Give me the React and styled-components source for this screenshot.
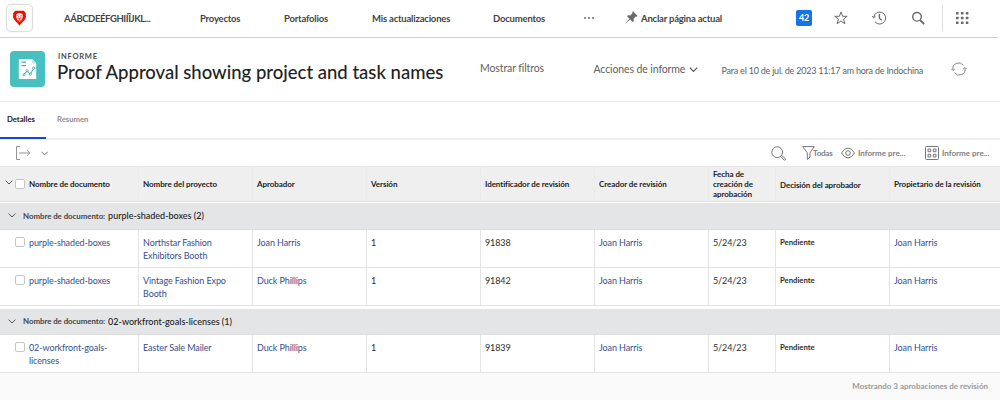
import React from 'react';
import styled, { createGlobalStyle } from 'styled-components';

const GlobalStyle = createGlobalStyle`
  * { box-sizing: border-box; }
  body { margin: 0; background: #fff; color: #2c2c2c; font-family: Lato, "Noto Sans", sans-serif; }
`;

const Page = styled.div`width: 1000px; height: 415px; overflow: hidden;`;

const NavBar = styled.header`
  display: flex; align-items: center; width: 998px; height: 38px;
  padding-left: 6px; border-bottom: 1px solid #cfcfcf;
`;
const LogoTile = styled.div`
  display: grid; place-items: center; width: 27px; height: 28px; flex: none;
  margin: 0 31px 2px 0; border: 1px solid #dedede; border-radius: 5px; box-shadow: 0 0 1px #d0d0d0;
`;
const NavItem = styled.a`
  flex: none; width: ${p => p.$w}px; white-space: nowrap;
  font-size: 9.5px; line-height: 14px; font-weight: 700;
  letter-spacing: ${p => p.$ls ?? -0.2}px; color: #444;
`;
const Ellipsis = styled.span`
  display: flex; gap: 2px; width: 41px; padding-bottom: 2px;
  i { width: 2px; height: 2px; border-radius: 1px; background: #6e6e6e; }
`;
const PinIcon = styled.svg`width: 13px; height: 13px; margin: 0 3px 2px 0; flex: none;`;
const CountBadge = styled.span`
  width: 16px; height: 16px; margin: 0 22px 2px 0; border-radius: 2px; background: #1473e6; color: #fff;
  font-size: 9px; line-height: 15px; font-weight: 700; letter-spacing: -.2px; text-align: center;
`;
const NavIcon = styled.svg`
  width: 14px; height: 14px; margin: 0 ${p => p.$gap || 0}px 2px 0; flex: none;
  fill: none; stroke: #6b6b6b; stroke-width: ${p => p.$stroke || 1};
`;
const NavDivider = styled.span`width: 1px; height: 26px; margin: 0 12px 2px 0; background: #dedede;`;

const ReportHeader = styled.section`
  display: flex; height: 64px; padding: 13px 0 0 10px; border-bottom: 1px solid #e6e6e6;
`;
const ReportTile = styled.div`
  display: grid; place-items: center; width: 35px; height: 36px; margin-right: 12px;
  border-radius: 4px; background: #47c0bf;
`;
const TitleBlock = styled.div`width: 423px; padding-top: 1px;`;
const Eyebrow = styled.div`
  font-size: 7.5px; line-height: 10px; font-weight: 700; letter-spacing: .75px; color: #4a4a4a;
  padding-left: 1px;
`;
const Title = styled.h1`
  margin: -2px 0 0; font-size: 18.5px; line-height: 24px; font-weight: 500;
  color: #222; white-space: nowrap;
`;
const HeaderAction = styled.div`
  display: flex; gap: 4px; width: ${p => p.$w}px; padding-top: ${p => p.$top}px;
  font-size: 10.5px; line-height: 14px; letter-spacing: -.11px; color: #5f5f5f; white-space: nowrap;
  svg { margin-top: 5px; }
`;
const Timestamp = styled.div`
  width: 229px; padding-top: 13px; font-size: 9px; line-height: 14px; letter-spacing: -.22px;
  color: #5f5f5f; white-space: nowrap;
`;
const RefreshIcon = styled.svg`width: 16px; height: 14px; margin-top: 11px;`;

const Tabs = styled.nav`
  display: flex; height: 38px; border-bottom: 2px solid #eee;
`;
const Tab = styled.a`
  height: 37px; width: ${p => (p.$active ? 46 : 53)}px; padding: 11px 0 0 ${p => (p.$active ? 7 : 11)}px;
  font-size: 7.7px; line-height: 12px; font-weight: 700;
  color: ${p => (p.$active ? '#222' : '#8c8c8c')};
  border-bottom: 2px solid ${p => (p.$active ? '#1747d1' : 'transparent')};
`;

const Toolbar = styled.div`
  display: flex; align-items: center; height: 26px; padding: 0 12px 0 16px;
  > svg { flex: none; }
`;
const ToolLabel = styled.span`
  flex: none; font-size: 8px; font-weight: 700; color: #808080; letter-spacing: ${p => p.$ls || 0}px;
  width: ${p => p.$w}px; margin-left: ${p => p.$ml}px; white-space: nowrap;
`;
const ToolIcon = styled.svg`fill: none; stroke: #777; stroke-width: 1; margin-left: ${p => p.$ml || 0}px;`;
const ToolDivider = styled.span`width: 1px; height: 16px; margin-left: 7px; background: #e3e3e3;`;

const GridRow = styled.div`
  display: grid; grid-template-columns: 139px 114px 114px 114px 114px 114px 67px 114px 110px;
  height: ${p => p.$h}px; border-bottom: 1px solid #e4e4e4;
`;
const HeadRow = styled(GridRow)`background: #efefef; border-top: 1px solid #e6e6e6; border-bottom-color: #e2e2e2;`;
const HeadCell = styled.div`
  display: flex; align-items: center; padding: ${p => p.$top || 0}px ${p => p.$right || 0}px 0 4px;
  border-right: 1px solid #ebebeb;
  font-size: 8px; line-height: 10px; font-weight: 700; letter-spacing: -.07px; color: #222;
  &:last-child { border-right: 0; }
  svg { margin: -4px 2px 0 1px; }
`;
const Cell = styled.div`
  display: flex; align-items: flex-start; padding: 6px 4px 0 4px; border-right: 1px solid #e4e4e4;
  font-size: 9px; line-height: 13.3px; letter-spacing: -.1px; color: #2e2e2e;
  &:first-child { padding-left: 15px; }
  &:last-child { border-right: 0; }
`;
const Link = styled.a`color: #35508f;`;
const Strong = styled.span`font-size: 7.7px; font-weight: 700; letter-spacing: 0;`;
const Check = styled.span`
  flex: none; width: 10px; height: 10px; margin: ${p => p.$top || 0}px 4px 0 0;
  background: #fff; border: 1px solid #c6c6c6; border-radius: 2px;
`;
const GroupRow = styled.div`
  display: flex; align-items: center; height: ${p => p.$h}px; margin-top: ${p => p.$mt}px;
  padding: 0 0 1px 8px;
  background: #e4e5e6; border-bottom: 1px solid #dedede; color: #222;
`;
const GroupLabel = styled.span`
  margin: 0 3px 0 7px; font-size: 7.9px; font-weight: 700; letter-spacing: -.05px; color: #444;
`;
const GroupValue = styled.span`font-size: 9px; font-weight: 500;`;
const Footer = styled.footer`
  height: 27px; padding: 7px 12px 0; background: #fafafa; color: #999; text-align: right;
  font-size: 8px; line-height: 13px; font-weight: 700;
`;

const Chevron = ({ w = 8 }) => (
  <svg width={w} height={w / 2 + 1} viewBox="0 0 8 5" fill="none" stroke="#555" strokeWidth="1"><path d="M.6.6 4 4 7.4.6" /></svg>
);

const rows = {
  a: [
    ['purple-shaded-boxes', 'Northstar Fashion Exhibitors Booth', 'Joan Harris', '91838'],
    ['purple-shaded-boxes', 'Vintage Fashion Expo Booth', 'Duck Phillips', '91842'],
  ],
  b: [['02-workfront-goals-licenses', 'Easter Sale Mailer', 'Duck Phillips', '91839']],
};

const DataRow = ({ data: [doc, project, approver, id] }) => (
  <GridRow $h={38}>
    <Cell><Check $top={1} /><Link>{doc}</Link></Cell>
    <Cell><Link>{project}</Link></Cell>
    <Cell><Link>{approver}</Link></Cell>
    <Cell>1</Cell>
    <Cell>{id}</Cell>
    <Cell><Link>Joan Harris</Link></Cell>
    <Cell>5/24/23</Cell>
    <Cell><Strong>Pendiente</Strong></Cell>
    <Cell><Link>Joan Harris</Link></Cell>
  </GridRow>
);

const Group = ({ name, items, h, mt }) => (
  <>
    <GroupRow $h={h} $mt={mt}><Chevron /><GroupLabel>Nombre de documento:</GroupLabel><GroupValue>{name}</GroupValue></GroupRow>
    {items.map(r => <DataRow key={r[3]} data={r} />)}
  </>
);

export default function App() {
  return (
    <Page>
      <GlobalStyle />
      <NavBar>
        <LogoTile>
          <svg width="15" height="16" viewBox="0 0 15 16">
            <path d="M3.2.8h8.6l2.400 3-.6 1 .5 2-1.200 2.600L7.500 15.400 2.100 9.400.9 6.800l.5-2-.6-1z" fill="#eb1000" />
            <path d="m4.500 4 1.800-.8h2.400l1.800.8.300 2.700-1 3L7.500 12 5.200 9.700l-1-3z" fill="#fff" />
            <path d="m4.600 5.300 2 .8M10.400 5.300l-2 .8M6.400 6.400 6 8.700M8.600 6.400 9 8.700M6.600 8.600h1.800l-.9 1zM5.800 10.500h3.400" fill="#eb1000" stroke="#eb1000" strokeWidth=".6" />
          </svg>
        </LogoTile>
        <NavItem $w={136} $ls={-0.41}>AÁBCDEÉFGHIÍÎJKL...</NavItem>
        <NavItem $w={84}>Proyectos</NavItem>
        <NavItem $w={88}>Portafolios</NavItem>
        <NavItem $w={121}>Mis actualizaciones</NavItem>
        <NavItem $w={91}>Documentos</NavItem>
        <Ellipsis><i /><i /><i /></Ellipsis>
        <PinIcon viewBox="0 0 13 13"><path d="m8 .3 4.7 4.6-1.1.8-.8-.1-2.1 2.2.1 2.4-1 .8L5.2 8.4.6 12.6l-.3-.3L4.5 7.7 2 5.2l.8-.9 2.4.1 2.200-2.100-.1-1z" fill="#6b6b6b" /></PinIcon>
        <NavItem $w={155}>Anclar página actual</NavItem>
        <CountBadge>42</CountBadge>
        <NavIcon $gap={24} viewBox="0 0 14 14"><path d="m7 .9 1.600 4.400h4.600L9.500 8.100l1.400 4.600L7 10l-3.900 2.700 1.400-4.600L.8 5.300h4.600z" /></NavIcon>
        <NavIcon $gap={25} viewBox="0 0 14 14"><path d="M1.7 6.600A6 6 0 1 1 3 10.800M0 5l1.700 1.900L3.600 5.200" /><path d="M7.400 3v4.200l2.300 2" strokeWidth="1.400" /></NavIcon>
        <NavIcon $gap={17} $stroke={1.4} viewBox="0 0 14 14"><circle cx="6" cy="5.800" r="4.300" /><path d="m9 9 4.200 4.200" strokeWidth="1.800" /></NavIcon>
        <NavDivider />
        <NavIcon viewBox="0 0 14 14">
          {[1, 5.7, 10.4].flatMap(y => [1, 5.9, 10.8].map(x => <rect key={`${x}-${y}`} x={x} y={y} width="2.6" height="2.6" rx=".6" fill="#6b6b6b" stroke="none" />))}
        </NavIcon>
      </NavBar>

      <ReportHeader>
        <ReportTile>
          <svg width="19" height="20" viewBox="0 0 19 20">
            <path d="M.8 0h13.400l4 4v16H.8z" fill="#fff" />
            <path d="M14.200 0v4h4" fill="#b9e4e3" />
            <path d="M3.500 3.200H8M3.500 6.700H8" stroke="#47a7a8" strokeWidth="1.300" />
            <path d="m6 15.800 3-4 3.400 3.300 3.200-5.600" fill="none" stroke="#4aa" strokeWidth="1" />
            <g fill="#fff" stroke="#4aa" strokeWidth=".9"><circle cx="6" cy="15.800" r="1.100" /><circle cx="9" cy="11.800" r="1.100" /><circle cx="12.300" cy="15.100" r="1.100" /><circle cx="15.600" cy="9.200" r="1.100" /></g>
          </svg>
        </ReportTile>
        <TitleBlock>
          <Eyebrow>INFORME</Eyebrow>
          <Title>Proof Approval showing project and task names</Title>
        </TitleBlock>
        <HeaderAction $w={113.5} $top={10}>Mostrar filtros</HeaderAction>
        <HeaderAction $w={128} $top={11}>Acciones de informe <Chevron w={9} /></HeaderAction>
        <Timestamp>Para el 10 de jul. de 2023 11:17 am hora de Indochina</Timestamp>
        <RefreshIcon viewBox="0 0 16 14" fill="none" stroke="#777" strokeWidth=".9">
          <path d="M2 7.800A5.800 5.800 0 0 1 12.400 3.300M14 6.200A5.800 5.800 0 0 1 3.600 10.700M.3 6.800l1.700 1.700 1.800-1.500M15.700 7.200 14 5.500 12.200 7" />
        </RefreshIcon>
      </ReportHeader>

      <Tabs><Tab $active>Detalles</Tab><Tab>Resumen</Tab></Tabs>

      <Toolbar>
        <svg width="15" height="14" viewBox="0 0 15 14" fill="none" stroke="#959595"><path d="M4 .5H.5v13H4M3 7h11M11 4.300 13.800 7 11 9.700" /></svg>
        <ToolIcon $ml={10} width="7" height="5" viewBox="0 0 7 5"><path d="m.3.7 3.200 3.200L6.700.7" /></ToolIcon>
        <ToolIcon $ml={723} width="15" height="15" viewBox="0 0 15 15"><circle cx="6.200" cy="6.200" r="5.400" /><path d="m10.300 9.200 4 3.400q.5 1.400-1 1.600L9.200 10.300" /></ToolIcon>
        <ToolDivider />
        <ToolIcon $ml={9} width="13" height="14" viewBox="0 0 13 14"><path d="M.7.600h11.600L8 6.800V11l-2.700 2.500V6.800z" /></ToolIcon>
        <ToolLabel $w={26} $ml={-2} $ls={-0.2}>Todas</ToolLabel>
        <ToolIcon $ml={2} width="14" height="12" viewBox="0 0 14 12"><path d="M.5 6Q3.200 1 7 1t6.500 5Q10.800 11 7 11T.5 6z" /><circle cx="7" cy="6" r="2.300" /></ToolIcon>
        <ToolLabel $w={63} $ml={3}>Informe pre...</ToolLabel>
        <ToolIcon $ml={4} width="14" height="14" viewBox="0 0 14 14"><rect x=".5" y=".5" width="13" height="13" rx="1" /><path d="M3 3h2.700v2.700H3zM8.300 3H11v2.700H8.300zM3 8.300h2.700V11H3zM8.300 8.300H11V11H8.300z" /></ToolIcon>
        <ToolLabel $w={47} $ml={3}>Informe pre...</ToolLabel>
      </Toolbar>

      <HeadRow $h={36}>
        <HeadCell><Chevron /><Check />Nombre de documento</HeadCell>
        <HeadCell>Nombre del proyecto</HeadCell>
        <HeadCell>Aprobador</HeadCell>
        <HeadCell>Versión</HeadCell>
        <HeadCell>Identificador de revisión</HeadCell>
        <HeadCell>Creador de revisión</HeadCell>
        <HeadCell $right={14}>Fecha de creación de aprobación</HeadCell>
        <HeadCell $top={2}>Decisión del aprobador</HeadCell>
        <HeadCell>Propietario de la revisión</HeadCell>
      </HeadRow>
      <Group name="purple-shaded-boxes (2)" items={rows.a} h={27} mt={1} />
      <Group name="02-workfront-goals-licenses (1)" items={rows.b} h={26} mt={3} />
      <Footer>Mostrando 3 aprobaciones de revisión</Footer>
    </Page>
  );
}
